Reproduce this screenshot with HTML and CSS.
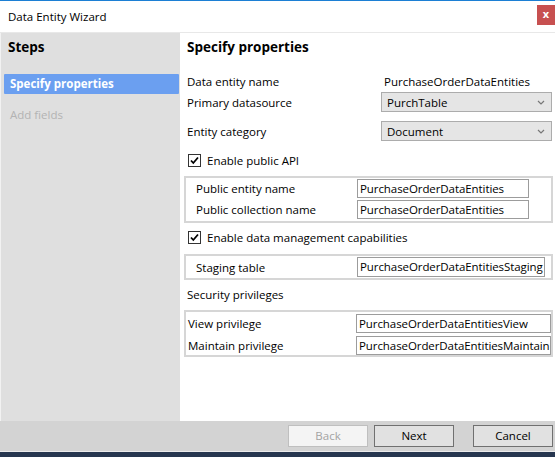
FILE: index.html
```html
<!DOCTYPE html>
<html>
<head>
<meta charset="utf-8">
<link rel="stylesheet" href="styles.css">
</head>
<body>
<div class="window">
  <div class="titlebar">
    <span class="title">Data Entity Wizard</span>
    <span class="close">x</span>
  </div>
  <div class="main">
    <div class="steps">
      <div class="steps-head">Steps</div>
      <div class="step active">Specify properties</div>
      <div class="step disabled">Add fields</div>
    </div>
    <div class="content">
      <div class="heading">Specify properties</div>
      <div class="row r1"><span class="lbl">Data entity name</span><span class="val">PurchaseOrderDataEntities</span></div>
      <div class="row r2"><span class="lbl">Primary datasource</span><span class="combo">PurchTable<svg class="chev" width="8" height="5" viewBox="0 0 8 5"><path d="M1 1 L4 4 L7 1" fill="none" stroke="#777" stroke-width="1.2"/></svg></span></div>
      <div class="row r3"><span class="lbl">Entity category</span><span class="combo">Document<svg class="chev" width="8" height="5" viewBox="0 0 8 5"><path d="M1 1 L4 4 L7 1" fill="none" stroke="#777" stroke-width="1.2"/></svg></span></div>
      <div class="check c1"><span class="box"><svg width="11" height="11" viewBox="0 0 11 11"><path d="M2 5.5 L4.3 8 L9 2.5" fill="none" stroke="#000" stroke-width="1.8"/></svg></span>Enable public API</div>
      <div class="group g1">
        <div class="grow"><span class="glbl">Public entity name</span><span class="tb w170">PurchaseOrderDataEntities</span></div>
        <div class="grow"><span class="glbl">Public collection name</span><span class="tb w170">PurchaseOrderDataEntities</span></div>
      </div>
      <div class="check c2"><span class="box"><svg width="11" height="11" viewBox="0 0 11 11"><path d="M2 5.5 L4.3 8 L9 2.5" fill="none" stroke="#000" stroke-width="1.8"/></svg></span>Enable data management capabilities</div>
      <div class="group g2">
        <div class="grow"><span class="glbl">Staging table</span><span class="tb w186">PurchaseOrderDataEntitiesStaging</span></div>
      </div>
      <div class="sec">Security privileges</div>
      <div class="group g3">
        <div class="grow"><span class="glbl2">View privilege</span><span class="tb w193">PurchaseOrderDataEntitiesView</span></div>
        <div class="grow"><span class="glbl2">Maintain privilege</span><span class="tb w193">PurchaseOrderDataEntitiesMaintain</span></div>
      </div>
    </div>
  </div>
  <div class="footer">
    <span class="btn back">Back</span>
    <span class="btn next">Next</span>
    <span class="btn cancel">Cancel</span>
  </div>
  <div class="taskbar"></div>
</div>
</body>
</html>
```
FILE: styles.css
```css
html, body {
  margin: 0;
  padding: 0;
  background: #fff;
}
body {
  width: 555px;
  height: 457px;
  overflow: hidden;
  font-family: "Open Sans", "Noto Sans", sans-serif;
  font-size: 11.5px;
  color: #000;
}
.window {
  display: flex;
  flex-direction: column;
  border-top: 1px solid #1c7fd4;
}
.titlebar {
  height: 31px;
  border-bottom: 1px solid #e8e8e8;
  display: flex;
  align-items: center;
  justify-content: space-between;
}
.title {
  margin-left: 8px;
  margin-top: -1px;
}
.close {
  width: 18px;
  height: 20px;
  margin-top: -3px;
  background: #c75050;
  color: #fff;
  font-weight: bold;
  font-size: 11px;
  line-height: 18px;
  text-align: center;
}
.main {
  height: 388px;
  display: flex;
}
.steps {
  width: 179px;
  border-left: 1px solid #f2f2f2;
  background: #dfdfdf;
  display: flex;
  flex-direction: column;
}
.steps-head {
  font-weight: bold;
  font-size: 13.5px;
  line-height: 18px;
  margin: 5px 0 0 7px;
}
.step {
  height: 20px;
  line-height: 20px;
  padding-left: 6px;
  font-weight: bold;
}
.step.active {
  margin: 18px 1px 0 3px;
  background: #6b9ff0;
  color: #fff;
  border-radius: 1px;
}
.step.disabled {
  margin: 11px 0 0 3px;
  color: #b3b3b3;
  font-weight: normal;
}
.content {
  flex: 1;
  background: #fff;
  padding: 0 2px 0 4px;
  display: flex;
  flex-direction: column;
}
.heading {
  font-weight: bold;
  font-size: 13.5px;
  line-height: 18px;
  margin: 5px 0 0 3px;
}
.row {
  display: flex;
  align-items: center;
  height: 20px;
}
.r1 { margin-top: 15px; }
.r2 { margin-top: 1px; }
.r3 { margin-top: 9px; }
.lbl {
  width: 194px;
  padding-left: 3px;
}
.val {
  padding-left: 3px;
}
.combo {
  height: 18px;
  border: 1px solid #acacac;
  background: #e5e5e5;
  display: flex;
  align-items: center;
  justify-content: space-between;
  padding: 0 0 0 5px;
  box-sizing: content-box;
  width: 164px;
}
.chev {
  margin-right: 6px;
}
.check {
  display: flex;
  align-items: center;
  height: 20px;
  padding-left: 4px;
}
.c1 { margin-top: 9px; }
.c2 { margin-top: 4px; }
.box {
  width: 11px;
  height: 11px;
  border: 1px solid #333;
  background: #fff;
  margin-right: 6px;
  display: flex;
}
.group {
  border: 2px solid #d6d6d6;
  display: flex;
  flex-direction: column;
}
.g1 { margin-top: 6px; padding: 1px 0 2px 0; gap: 2px; }
.g2 { margin-top: 7px; padding: 1px 0 1px 0; }
.g3 { margin-top: 5px; padding: 2px 0 0 0; gap: 3px; }
.grow {
  display: flex;
  align-items: center;
}
.glbl {
  width: 161px;
  padding-left: 10px;
}
.glbl2 {
  width: 168px;
  padding-left: 2px;
}
.tb {
  height: 17px;
  border: 1px solid #9c9c9c;
  background: #fff;
  padding-left: 2px;
  line-height: 17px;
  white-space: nowrap;
  overflow: hidden;
  letter-spacing: -0.08px;
}
.g2 .tb { height: 18px; line-height: 18px; }
.w170 { width: 168px; }
.w186 { width: 184px; }
.w193 { width: 191px; }
.sec {
  height: 20px;
  line-height: 20px;
  margin-top: 5px;
  padding-left: 3px;
}
.footer {
  height: 30px;
  background: #d3d3d3;
  border-bottom: 1px solid #ececec;
  display: flex;
  align-items: center;
  padding-left: 288px;
}
.btn {
  height: 20px;
  line-height: 20px;
  width: 78px;
  border: 1px solid #adadad;
  background: #e1e1e1;
  text-align: center;
}
.btn.back {
  background: #f4f4f4;
  border-color: #bfbfbf;
  color: #a3a3a3;
}
.btn.next { margin-left: 6px; border-color: #707070; }
.btn.cancel { margin-left: 19px; border-color: #707070; }
.taskbar {
  height: 5px;
  background: #26364f;
}
```
